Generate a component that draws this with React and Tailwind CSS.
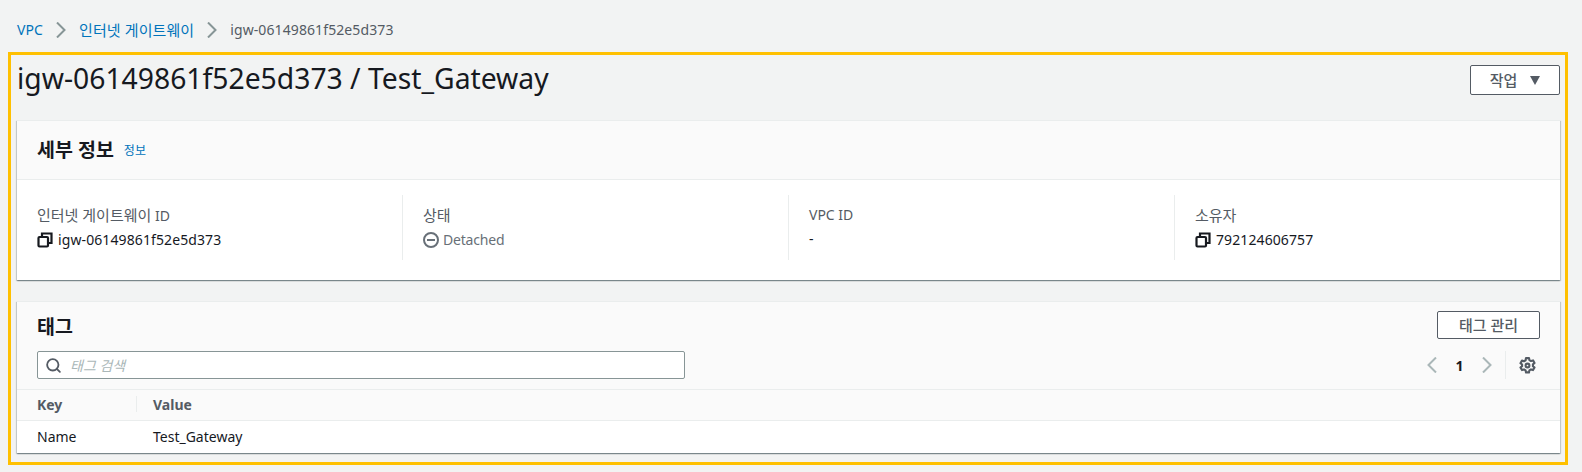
import React from 'react'
import { Search } from 'lucide-react'

const FONT = "font-['Noto_Sans','Noto_Sans_CJK_KR',sans-serif]"

const CARD_SHADOW = 'shadow-[0_1px_1px_0_rgba(0,28,36,0.3),1px_1px_1px_0_rgba(0,28,36,0.15),-1px_1px_1px_0_rgba(0,28,36,0.15)]'

const Ko = ({ children }) => <span className="text-[15px]">{children}</span>

const CopyIcon = () => (
  <svg width="16" height="16" viewBox="0 0 16 16" fill="none" stroke="#16191f" strokeWidth="2.2" className="shrink-0">
    <rect x="1.5" y="5" width="9.5" height="9.5" rx="1" />
    <path d="M5 4.5V1.5h9.5V11H11.5" />
  </svg>
)

const Chevron = ({ left, color = '#879596' }) => (
  <svg width="16" height="16" viewBox="0 0 16 16" fill="none" stroke={color} strokeWidth="2" className="shrink-0">
    <path d={left ? 'M12 0.5L4.5 8l7.5 7.5' : 'M4 0.5L11.5 8 4 15.5'} />
  </svg>
)

const GearIcon = () => (
  <svg width="17" height="17" viewBox="0 0 16 16" fill="none" stroke="#545b64" strokeWidth="2" strokeLinejoin="round">
    <path d="M6.6 1h2.8l.4 1.9 1.5.9 1.9-.6 1.4 2.4-1.5 1.3v1.7l1.5 1.3-1.4 2.4-1.9-.6-1.5.9-.4 1.9H6.6l-.4-1.9-1.5-.9-1.9.6-1.4-2.4 1.5-1.3V7.1L1.4 5.8l1.4-2.4 1.9.6 1.5-.9z" />
    <circle cx="8" cy="8" r="1.8" />
  </svg>
)

const Detail = ({ label, first, children }) => (
  <div className={`flex-1 px-5 h-[65px] ${first ? '' : 'border-l border-[#eaeded]'}`}>
    <div className="text-[14px] leading-[22px] text-[#545b64] mt-[9px]">{label}</div>
    <div className="text-[14px] leading-[22px] text-[#16191f] mt-[2px] flex items-center gap-[5px] tracking-[0.1px]">{children}</div>
  </div>
)

export default function App() {
  return (
    <div className={`${FONT} w-[1582px] h-[472px] bg-[#f2f3f3] overflow-hidden`}>
      <nav className="h-[52px] pl-[17px] pt-[19px] flex items-start gap-[10px] text-[14px] leading-[22px] tracking-[0.1px]">
        <a className="text-[#0073bb]">VPC</a>
        <span className="mt-[3px]"><Chevron /></span>
        <a className="text-[#0073bb]"><Ko>인터넷 게이트웨이</Ko></a>
        <span className="mt-[3px]"><Chevron /></span>
        <span className="text-[#545b64]">igw-06149861f52e5d373</span>
      </nav>

      <main className="ml-[8px] w-[1560px] h-[413px] border-[3px] border-[#ffc000] pl-[6px] pr-[5px]">
        <div className="flex items-start justify-between h-[65px] pt-[10px]">
          <h1 className="text-[28.3px] leading-[36px] font-normal text-[#16191f] mt-[-5px]">igw-06149861f52e5d373 / Test_Gateway</h1>
          <button className="w-[90px] h-[30px] bg-white border border-[#545b64] rounded-[2px] flex items-center justify-center gap-[13px] text-[15px] text-[#545b64] font-medium">
            작업
            <svg width="10" height="9" viewBox="0 0 10 9" fill="#545b64"><path d="M0 0h10L5 9z" /></svg>
          </button>
        </div>

        <section className={`bg-white border-t border-[#eaeded] h-[160px] ${CARD_SHADOW}`}>
          <div className="h-[59px] bg-[#fafafa] border-b border-[#eaeded] pl-5 flex items-center gap-[10px]">
            <h2 className="text-[19.5px] font-bold text-[#16191f]">세부 정보</h2>
            <a className="text-[12px] text-[#0073bb] mt-[2px]">정보</a>
          </div>
          <div className="flex pt-[15px]">
            <Detail label={<><Ko>인터넷 게이트웨이</Ko> ID</>} first><CopyIcon />igw-06149861f52e5d373</Detail>
            <Detail label={<Ko>상태</Ko>}>
              <svg width="16" height="16" viewBox="0 0 16 16" fill="none" stroke="#687078" strokeWidth="2" className="shrink-0">
                <circle cx="8" cy="8" r="7" />
                <path d="M4 8h8" />
              </svg>
              <span className="text-[#687078] -ml-[1px] tracking-[-0.2px]">Detached</span>
            </Detail>
            <Detail label="VPC ID">-</Detail>
            <Detail label={<Ko>소유자</Ko>}><CopyIcon />792124606757</Detail>
          </div>
        </section>

        <section className={`mt-[21px] bg-white border-t border-[#eaeded] h-[152px] ${CARD_SHADOW}`}>
          <div className="h-[88px] bg-[#fafafa] border-b border-[#eaeded] pl-5 pr-5 pt-[9px]">
            <div className="flex items-center justify-between h-[28px]">
              <h2 className="text-[19.5px] font-bold text-[#16191f] mt-[4px]">태그</h2>
              <button className="w-[103px] h-[28px] bg-white border border-[#545b64] rounded-[2px] text-[15px] font-medium text-[#545b64]">태그 관리</button>
            </div>
            <div className="flex items-center justify-between mt-[12px]">
              <div className="w-[648px] h-[28px] bg-white border border-[#879596] rounded-[2px] flex items-center pl-[7px] gap-[8px]">
                <Search size={17} strokeWidth={2.6} color="#545b64" className="shrink-0" />
                <span className="text-[14px] italic text-[#aab7b8]">태그 검색</span>
              </div>
              <div className="flex items-center h-[28px] pr-[4px]">
                <Chevron left color="#aab7b8" />
                <span className="w-[39px] text-center text-[14px] font-bold text-[#16191f]">1</span>
                <Chevron color="#aab7b8" />
                <span className="h-[28px] w-px bg-[#eaeded] ml-[10px] mr-[13px]" />
                <GearIcon />
              </div>
            </div>
          </div>
          <div className="h-[31px] bg-[#fafafa] border-b border-[#eaeded] flex items-center text-[14px] font-bold text-[#545b64] pb-[2px]">
            <div className="w-[120px] pl-5 border-r border-[#eaeded] h-[16px] flex items-center">Key</div>
            <div className="pl-4">Value</div>
          </div>
          <div className="h-[32px] flex items-center text-[14px] text-[#16191f] pb-[2px]">
            <div className="w-[120px] pl-5">Name</div>
            <div className="pl-4">Test_Gateway</div>
          </div>
        </section>
      </main>
    </div>
  )
}
